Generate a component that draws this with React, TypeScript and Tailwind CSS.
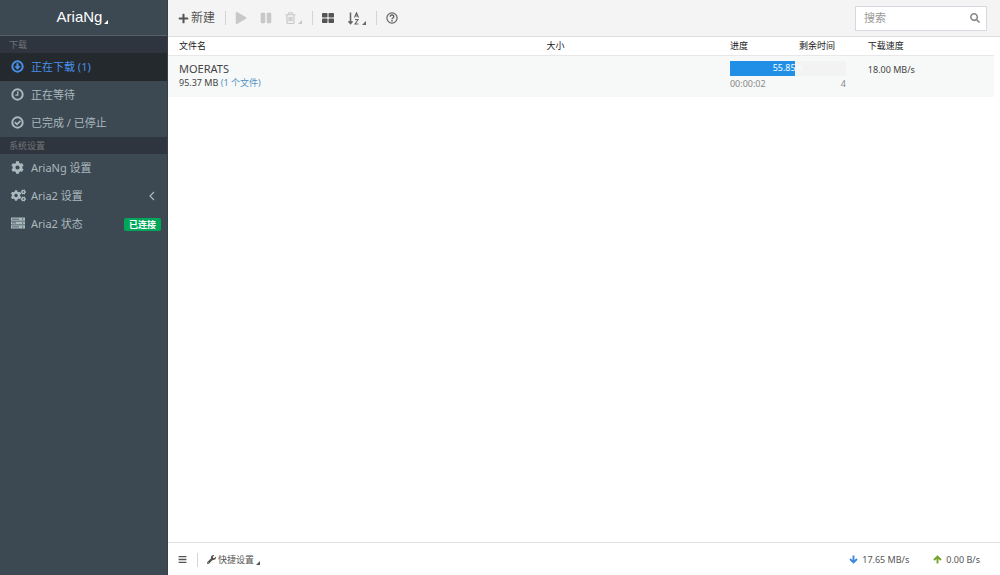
import React, { type ReactNode } from "react";
import { FaBars, FaCog, FaCogs, FaPause, FaPlay, FaPlus, FaSearch, FaWrench } from "react-icons/fa";

function RingIcon({ children }: { children: ReactNode }) {
  return (
    <svg viewBox="0 0 24 24" className="size-[13px]" fill="none" stroke="currentColor" strokeWidth="3.6">
      <circle cx="12" cy="12" r="9.6" />
      {children}
    </svg>
  );
}

function DownloadingIcon() {
  return (
    <RingIcon>
      <path d="M10 6h4v5.5h4l-6 6.500-6-6.500h4z" fill="currentColor" stroke="none" />
    </RingIcon>
  );
}

function WaitingIcon() {
  return (
    <RingIcon>
      <path d="M12.500 6v7H8" strokeWidth="2.4" />
    </RingIcon>
  );
}

function FinishedIcon() {
  return (
    <RingIcon>
      <path d="m7 11.500 4 4 6.500-6.500" strokeWidth="3.2" />
    </RingIcon>
  );
}

function ServerIcon() {
  return (
    <svg viewBox="0 0 28 24" className="h-3 w-3.5" fill="currentColor">
      <path
        fillRule="evenodd"
        d="M0 1h28v6.4H0zM2 3.4v1.4h14V3.4zM22 3v2h2.4V3zM0 8.800h28v6.400H0zm2 2.400v1.400h8v-1.400zM22 11v2h2.4v-2zM0 16.600h28V23H0zm2 2.400v1.400h14v-1.400zM22 19v2h2.4v-2z"
      />
    </svg>
  );
}

function TrashIcon() {
  return (
    <svg viewBox="0 0 22 24" className="h-3 w-[11px]" fill="none" stroke="currentColor" strokeWidth="2.4">
      <path d="M1 5.5h20M7 5l1-3.5h6L15 5M4 5.5V21q0 2 2 2h10q2 0 2-2V5.5M8 9.5v9M11 9.5v9M14 9.5v9" />
    </svg>
  );
}

function GridIcon() {
  return (
    <svg viewBox="0 0 24 20" className="h-2.5 w-3" fill="currentColor">
      <rect x="0" y="0" width="11" height="9" rx="1.5" />
      <rect x="13" y="0" width="11" height="9" rx="1.5" />
      <rect x="0" y="11" width="11" height="9" rx="1.5" />
      <rect x="13" y="11" width="11" height="9" rx="1.5" />
    </svg>
  );
}

function SortIcon() {
  return (
    <svg viewBox="0 0 24 26" className="h-[13px] w-3" fill="none" stroke="currentColor" strokeWidth="3">
      <path d="M5 1v22M1 18.5l4 4.5 4-4.5" />
      <path d="m13 11 4-9.5L21 11M14.5 8h5M14 15h6l-6 9h7" strokeWidth="2.2" />
    </svg>
  );
}

function HelpIcon() {
  return (
    <svg viewBox="0 0 24 24" className="size-3" fill="none" stroke="currentColor" strokeWidth="2.4">
      <circle cx="12" cy="12" r="10.2" />
      <path d="M8.3 9.5Q8.5 6 12 6t3.700 3.200Q15.700 11 13.500 12 12 12.800 12 14.500" strokeWidth="2.8" />
      <path d="M12 16v3" strokeWidth="3" />
    </svg>
  );
}

function SpeedArrow({ up }: { up?: boolean }) {
  return (
    <svg viewBox="0 0 18 18" className="size-[9px]" fill="none" stroke="currentColor" strokeWidth="3.8">
      <path d={up ? "M9 17V3M2 10l7-7 7 7" : "M9 1v14M2 8l7 7 7-7"} />
    </svg>
  );
}

function Corner() {
  return (
    <svg viewBox="0 0 4 4" className="size-1" fill="currentColor">
      <path d="M4 0v4H0z" />
    </svg>
  );
}

function Divider() {
  return (
    <span className="flex w-5 justify-center">
      <span className="h-3.5 w-px bg-[#d4d4d4]" />
    </span>
  );
}

function SectionTitle({ children }: { children: ReactNode }) {
  return (
    <h2 className="h-[17px] bg-[#2f353e] pl-[9px] text-[9px] leading-[17px] text-[#6f7478]">{children}</h2>
  );
}

type NavItemProps = { icon: ReactNode; label: string; active?: boolean; children?: ReactNode };

function NavItem({ icon, label, active, children }: NavItemProps) {
  return (
    <li>
      <a
        href="#"
        className={
          active
            ? "flex h-7 items-center bg-[#23292d] pr-1.5 pl-[11px] text-[#4a90ea]"
            : "flex h-7 items-center pr-1.5 pl-[11px] text-[#a9b9bd]"
        }
      >
        <span className="flex w-5 items-center pb-0.5">{icon}</span>
        <span className="flex-1">{label}</span>
        {children}
      </a>
    </li>
  );
}

function Sidebar() {
  return (
    <aside className="flex w-[168px] shrink-0 flex-col border-r border-[#35414a] bg-[#3c4852] text-[11px]">
      <button className="flex h-9 items-center justify-center gap-0.5 border-b border-[#56616a] pr-0.5 font-['Liberation_Sans','Noto_Sans_CJK_SC',sans-serif] text-[15px] text-white">
        AriaNg
        <span className="pt-2">
          <Corner />
        </span>
      </button>
      <nav>
        <SectionTitle>下载</SectionTitle>
        <ul>
          <NavItem icon={<DownloadingIcon />} label="正在下载 (1)" active />
          <NavItem icon={<WaitingIcon />} label="正在等待" />
          <NavItem icon={<FinishedIcon />} label="已完成 / 已停止" />
        </ul>
        <SectionTitle>系统设置</SectionTitle>
        <ul>
          <NavItem icon={<FaCog className="size-[13px]" />} label="AriaNg 设置" />
          <NavItem icon={<FaCogs className="size-[15px]" />} label="Aria2 设置">
            <svg
              viewBox="0 0 6 10"
              className="mr-1.5 h-2.5 w-1.5"
              fill="none"
              stroke="currentColor"
              strokeWidth="1.2"
            >
              <path d="M5 1 1 5l4 4" />
            </svg>
          </NavItem>
          <NavItem icon={<ServerIcon />} label="Aria2 状态">
            <span className="h-[13px] rounded-xs bg-[#00a65a] px-[5px] text-[9px] leading-[13px] font-bold text-white">
              已连接
            </span>
          </NavItem>
        </ul>
      </nav>
    </aside>
  );
}

function Toolbar() {
  return (
    <header className="flex h-[37px] items-center border-b border-[#dddfe2] bg-[#f4f4f4] pr-[13px] pl-2.5 text-[#666]">
      <div className="flex flex-1 items-center">
        <button className="flex items-center gap-0.5 text-xs text-[#555]">
          <FaPlus className="size-[11px]" />
          新建
        </button>
        <Divider />
        <div className="flex items-center gap-[13px] text-[#c8c8c8]">
          <button aria-label="开始" disabled>
            <FaPlay className="size-3" />
          </button>
          <button aria-label="暂停" disabled>
            <FaPause className="size-3" />
          </button>
          <button aria-label="删除" disabled className="flex items-end gap-0.5">
            <TrashIcon />
            <Corner />
          </button>
        </div>
        <Divider />
        <div className="flex items-center gap-3.5">
          <button aria-label="显示" className="text-[#555]">
            <GridIcon />
          </button>
          <button aria-label="排序" className="flex items-end gap-0.5">
            <SortIcon />
            <Corner />
          </button>
        </div>
        <Divider />
        <button aria-label="帮助">
          <HelpIcon />
        </button>
      </div>
      <label className="flex h-[25px] w-[132px] items-center border border-[#d6dae0] bg-white pr-1.5 pl-2">
        <input
          type="text"
          placeholder="搜索"
          aria-label="搜索"
          className="w-full min-w-0 bg-transparent text-[11px] outline-none placeholder:text-[#999]"
        />
        <FaSearch className="size-2.5 shrink-0 text-[#888]" />
      </label>
    </header>
  );
}

function TaskTable() {
  return (
    <div className="min-h-0 flex-1 pr-1.5">
      <table className="w-full table-fixed text-left text-[9px] text-[#444]">
        <colgroup>
          <col className="w-[44.5%]" />
          <col className="w-[22.2%]" />
          <col className="w-[8.35%]" />
          <col className="w-[8.35%]" />
          <col />
        </colgroup>
        <thead>
          <tr className="h-[18px] border-b border-[#e8e8e8] text-[#222]">
            <th className="pl-[11px] font-normal">文件名</th>
            <th className="pl-[11px] font-normal">大小</th>
            <th className="pl-[11px] font-normal">进度</th>
            <th className="pl-[11px] font-normal">剩余时间</th>
            <th className="pl-[11px] font-normal">下载速度</th>
          </tr>
        </thead>
        <tbody>
          <tr className="h-[42px] bg-[#f7f9f8] align-top">
            <td className="pt-[5px] pl-[11px]" colSpan={2}>
              <div className="text-[11px] leading-4">MOERATS</div>
              <div className="leading-3">
                95.37 MB{" "}
                <a href="#" className="text-[#5092c4]">
                  (1 个文件)
                </a>
              </div>
            </td>
            <td className="px-[11px] pt-[5px]" colSpan={2}>
              <div
                role="progressbar"
                aria-label="进度"
                aria-valuenow={55.85}
                className="flex h-[15px] items-center bg-linear-to-r from-[#208fe5] from-[55.85%] to-[#f3f3f3] to-[55.85%]"
              >
                <span className="w-full text-center text-[#f8fcff]">55.85%</span>
              </div>
              <div className="flex justify-between pt-0.5 leading-3 text-[#888]">
                <span>00:00:02</span>
                <span>4</span>
              </div>
            </td>
            <td className="pt-2 pl-[11px] leading-3">18.00 MB/s</td>
          </tr>
        </tbody>
      </table>
    </div>
  );
}

function StatusBar() {
  return (
    <footer className="flex h-[33px] items-center border-t border-[#e2e2e2] pt-px pr-5 pl-2.5 text-[9px] text-[#555]">
      <button aria-label="菜单">
        <FaBars className="size-[9px]" />
      </button>
      <Divider />
      <button className="flex items-center gap-0.5">
        <FaWrench className="size-[9px]" />
        快捷设置
        <span className="pt-1.5">
          <Corner />
        </span>
      </button>
      <div className="flex flex-1 justify-end gap-6">
        <span className="flex items-center gap-1">
          <span className="text-[#3f87df]">
            <SpeedArrow />
          </span>
          17.65 MB/s
        </span>
        <span className="flex items-center gap-1">
          <span className="text-[#74a329]">
            <SpeedArrow up />
          </span>
          0.00 B/s
        </span>
      </div>
    </footer>
  );
}

export default function App() {
  return (
    <div className="flex h-screen bg-white font-['Noto_Sans','Noto_Sans_CJK_SC',sans-serif]">
      <Sidebar />
      <main className="flex min-w-0 flex-1 flex-col">
        <Toolbar />
        <TaskTable />
        <StatusBar />
      </main>
    </div>
  );
}
